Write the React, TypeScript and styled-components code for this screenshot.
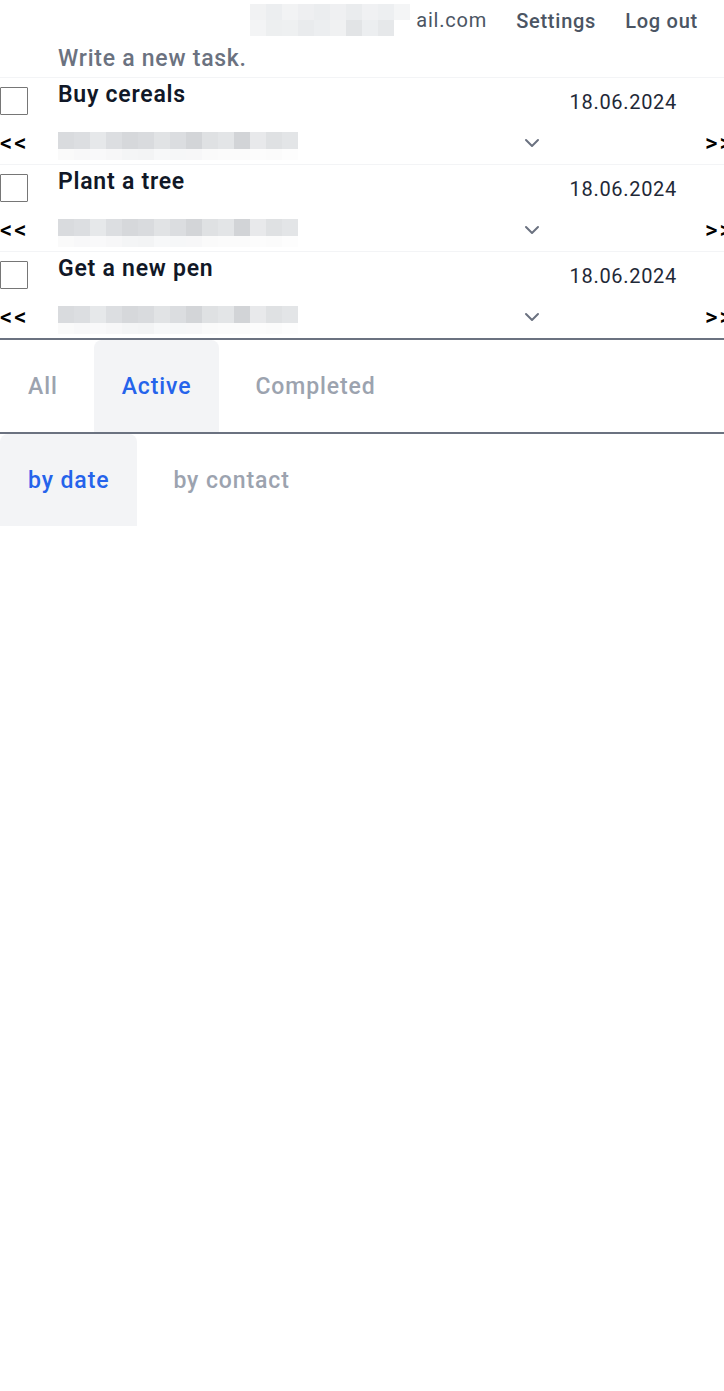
import React from "react";
import styled, { createGlobalStyle } from "styled-components";

const Global = createGlobalStyle`
  html, body { margin: 0; padding: 0; background: #ffffff; overflow-x: hidden; }
  body { font-family: Roboto, "Noto Sans", "Liberation Sans", sans-serif; color: #111827; }
  * { box-sizing: border-box; }
`;

const Page = styled.div`
  width: 724px;
  overflow: hidden;
`;

const Header = styled.header`
  display: flex;
  justify-content: flex-end;
  align-items: center;
  gap: 29px;
  height: 42px;
  padding-right: 26px;
`;

const Email = styled.span`
  display: flex;
  align-items: center;
  gap: 6px;
  font-size: 20px;
  letter-spacing: 0.8px;
  color: #4b5563;
  margin-top: -3px;
`;

const HeaderLink = styled.a`
  font-size: 20px;
  font-weight: 500;
  letter-spacing: 0.75px;
  color: #4b5563;
  text-decoration: none;
`;

const Mosaic = styled.div<{ $cols: number; $cell: number; $row?: number }>`
  display: grid;
  grid-template-columns: repeat(${(p) => p.$cols}, ${(p) => p.$cell}px);
  grid-auto-rows: ${(p) => p.$row ?? p.$cell}px;
`;

const Cell = styled.span<{ $c: string }>`
  background: ${(p) => p.$c};
`;

const NewTask = styled.input`
  display: block;
  width: 100%;
  height: 36px;
  border: none;
  border-bottom: 1px solid #f3f4f6;
  padding: 0 0 3px 58px;
  font-family: inherit;
  font-size: 23px;
  font-weight: 500;
  letter-spacing: 0.75px;
  outline: none;
  background: transparent;
  &::placeholder { color: #6b7280; }
`;

const TaskList = styled.ul`
  list-style: none;
  margin: 0;
  padding: 0;
  border-bottom: 2px solid #6b7280;
`;

const TaskItem = styled.li`
  height: 87px;
  border-bottom: 1px solid #f3f4f6;
  &:last-child { border-bottom: none; height: 86px; }
`;

const TopRow = styled.div`
  display: flex;
  align-items: flex-start;
  height: 44px;
`;

const Check = styled.span`
  width: 28px;
  height: 28px;
  margin-top: 9px;
  margin-right: 30px;
  border: 1.5px solid #767676;
  border-radius: 1px;
  flex: none;
`;

const Title = styled.span`
  margin-top: 3px;
  font-size: 23px;
  font-weight: 600;
  letter-spacing: 0.75px;
  line-height: 28px;
  color: #111827;
`;

const DateText = styled.span`
  margin-left: auto;
  margin-right: 47px;
  margin-top: 12px;
  font-size: 20px;
  letter-spacing: 0.7px;
  line-height: 24px;
  color: #1f2937;
`;

const BottomRow = styled.div`
  display: flex;
  align-items: center;
  height: 42px;
`;

const Arrow = styled.span<{ $right?: boolean }>`
  font-size: 24px;
  font-weight: 500;
  letter-spacing: 2px;
  line-height: 24px;
  color: #000;
  width: ${(p) => (p.$right ? "auto" : "58px")};
  margin-left: ${(p) => (p.$right ? "auto" : "0")};
  margin-right: ${(p) => (p.$right ? "-10px" : "0")};
  white-space: nowrap;
`;

const Select = styled.div`
  width: 492px;
  display: flex;
  align-items: flex-start;
  justify-content: space-between;
  padding-right: 10px;
  height: 30px;
  padding-top: 4px;
`;

const SelectValue = styled.div`
  display: flex;
  flex-direction: column;
`;

const Chevron = styled.svg`
  width: 16px;
  height: 10px;
  margin-top: 6px;
`;

const TabBar = styled.nav<{ $line?: boolean }>`
  display: flex;
  gap: 8px;
  height: ${(p) => (p.$line ? "94px" : "92px")};
  border-bottom: ${(p) => (p.$line ? "2px solid #6b7280" : "none")};
`;

const Tab = styled.button<{ $active?: boolean }>`
  border: none;
  border-radius: 8px 8px 0 0;
  padding: 0 28px;
  height: 92px;
  font-family: inherit;
  font-size: 23px;
  font-weight: 500;
  letter-spacing: 0.9px;
  background: ${(p) => (p.$active ? "#f3f4f6" : "transparent")};
  color: ${(p) => (p.$active ? "#2563eb" : "#9ca3af")};
  cursor: pointer;
`;

const emailCells = [
  "#f1f2f3", "#eceef0", "#f2f3f4", "#eeeff1", "#ebedef", "#eff0f2", "#eaecee", "#f0f1f3", "#edeff1", "#f4f5f6",
  "#f3f4f5", "#edeff0", "#eef0f1", "#e9ebed", "#eceef0", "#f0f1f2", "#e2e4e6", "#eceef0", "#e6e8ea", "#ffffff",
];

const taskTop = [
  "#d9dbde", "#dcdee1", "#e6e8ea", "#dcdee1", "#d6d8db", "#d9dbde", "#e1e3e5", "#dbdde0",
  "#d3d5d8", "#dfe1e3", "#e3e5e7", "#d2d4d7", "#e8e9eb", "#dfe1e3", "#e3e5e7",
];
const taskBottom = [
  "#fafafa", "#f8f8f9", "#f9f9fa", "#f7f7f8", "#f4f5f6", "#f3f4f5", "#f7f8f9", "#f6f7f8",
  "#f7f7f8", "#fafafa", "#fbfbfb", "#fbfbfb", "#fcfcfc", "#fbfbfb", "#fdfdfd",
];

const tasks = [
  { title: "Buy cereals", date: "18.06.2024" },
  { title: "Plant a tree", date: "18.06.2024" },
  { title: "Get a new pen", date: "18.06.2024" },
];

export default function App() {
  return (
    <Page>
      <Global />
      <Header>
        <Email>
          <Mosaic $cols={10} $cell={16}>
            {emailCells.map((c, i) => (
              <Cell key={i} $c={c} />
            ))}
          </Mosaic>
          <span>ail.com</span>
        </Email>
        <HeaderLink href="#">Settings</HeaderLink>
        <HeaderLink href="#">Log out</HeaderLink>
      </Header>
      <NewTask placeholder="Write a new task." />
      <TaskList>
        {tasks.map((t) => (
          <TaskItem key={t.title}>
            <TopRow>
              <Check />
              <Title>{t.title}</Title>
              <DateText>{t.date}</DateText>
            </TopRow>
            <BottomRow>
              <Arrow>&lt;&lt;</Arrow>
              <Select>
                <SelectValue>
                  <Mosaic $cols={15} $cell={16} $row={17}>
                    {taskTop.map((c, i) => (
                      <Cell key={i} $c={c} />
                    ))}
                  </Mosaic>
                  <Mosaic $cols={15} $cell={16} $row={11}>
                    {taskBottom.map((c, i) => (
                      <Cell key={i} $c={c} />
                    ))}
                  </Mosaic>
                </SelectValue>
                <Chevron viewBox="0 0 16 10" fill="none">
                  <path d="M2 2l6 6 6-6" stroke="#6b7280" strokeWidth="2" strokeLinecap="round" strokeLinejoin="round" />
                </Chevron>
              </Select>
              <Arrow $right>&gt;&gt;</Arrow>
            </BottomRow>
          </TaskItem>
        ))}
      </TaskList>
      <TabBar $line>
        <Tab>All</Tab>
        <Tab $active>Active</Tab>
        <Tab>Completed</Tab>
      </TabBar>
      <TabBar>
        <Tab $active>by date</Tab>
        <Tab>by contact</Tab>
      </TabBar>
    </Page>
  );
}
